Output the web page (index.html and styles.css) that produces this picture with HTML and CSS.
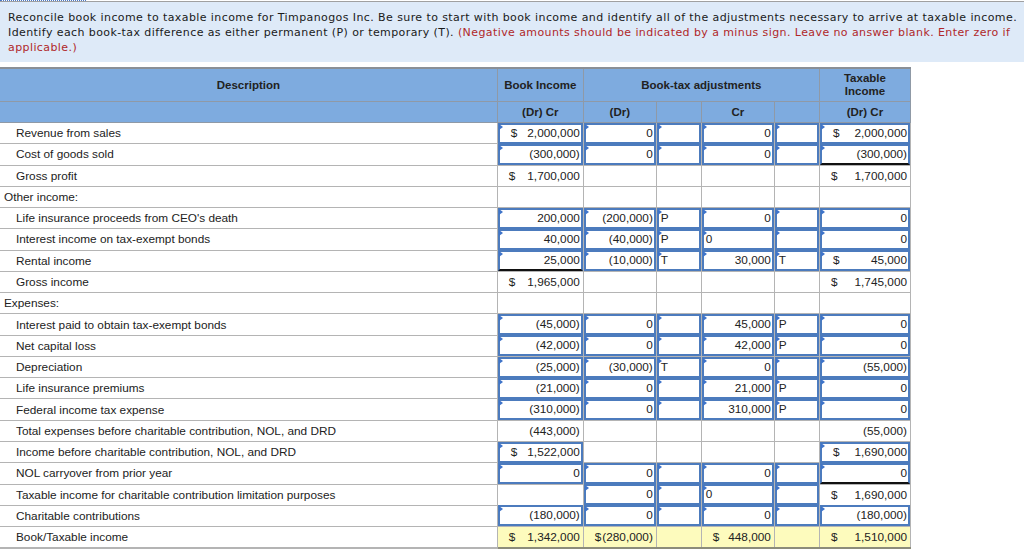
FILE: index.html
```html
<!DOCTYPE html>
<html>
<head>
<meta charset="utf-8">
<link rel="stylesheet" href="styles.css">
</head>
<body>
<div class="prompt">
  <p>Reconcile book income to taxable income for Timpanogos Inc. Be sure to start with book income and identify all of the adjustments necessary to arrive at taxable income. Identify each book-tax difference as either permanent (P) or temporary (T). <span class="warn">(Negative amounts should be indicated by a minus sign. Leave no answer blank. Enter zero if applicable.)</span></p>
</div>
<table class="recon">
  <colgroup>
    <col class="c-desc"><col class="c-book"><col class="c-dr"><col class="c-pt"><col class="c-cr"><col class="c-pt"><col class="c-tax">
  </colgroup>
  <thead>
    <tr class="h1">
      <th>Description</th>
      <th>Book Income</th>
      <th colspan="4">Book-tax adjustments</th>
      <th>Taxable<br>Income</th>
    </tr>
    <tr class="h2">
      <th></th>
      <th>(Dr) Cr</th>
      <th>(Dr)</th>
      <th></th>
      <th>Cr</th>
      <th></th>
      <th>(Dr) Cr</th>
    </tr>
  </thead>
  <tbody>
    <tr>
      <td class="desc ind">Revenue from sales</td>
      <td class="in"><div class="inp usd"><span>$</span><span>2,000,000</span></div></td>
      <td class="in"><div class="inp">0</div></td>
      <td class="in"><div class="inp l"></div></td>
      <td class="in"><div class="inp">0</div></td>
      <td class="in"><div class="inp l"></div></td>
      <td class="in"><div class="inp usd"><span>$</span><span>2,000,000</span></div></td>
    </tr>
    <tr>
      <td class="desc ind">Cost of goods sold</td>
      <td class="in"><div class="inp">(300,000)</div></td>
      <td class="in"><div class="inp">0</div></td>
      <td class="in"><div class="inp l"></div></td>
      <td class="in"><div class="inp">0</div></td>
      <td class="in"><div class="inp l"></div></td>
      <td class="in"><div class="inp ul">(300,000)</div></td>
    </tr>
    <tr>
      <td class="desc ind">Gross profit</td>
      <td class="num"><div class="usd"><span>$</span><span>1,700,000</span></div></td>
      <td></td><td></td><td></td><td></td>
      <td class="num"><div class="usd"><span>$</span><span>1,700,000</span></div></td>
    </tr>
    <tr>
      <td class="desc">Other income:</td>
      <td></td><td></td><td></td><td></td><td></td><td></td>
    </tr>
    <tr>
      <td class="desc ind">Life insurance proceeds from CEO's death</td>
      <td class="in"><div class="inp">200,000</div></td>
      <td class="in"><div class="inp">(200,000)</div></td>
      <td class="in"><div class="inp l">P</div></td>
      <td class="in"><div class="inp">0</div></td>
      <td class="in"><div class="inp l"></div></td>
      <td class="in"><div class="inp">0</div></td>
    </tr>
    <tr>
      <td class="desc ind">Interest income on tax-exempt bonds</td>
      <td class="in"><div class="inp">40,000</div></td>
      <td class="in"><div class="inp">(40,000)</div></td>
      <td class="in"><div class="inp l">P</div></td>
      <td class="in"><div class="inp l">0</div></td>
      <td class="in"><div class="inp l"></div></td>
      <td class="in"><div class="inp">0</div></td>
    </tr>
    <tr>
      <td class="desc ind">Rental income</td>
      <td class="in"><div class="inp ul">25,000</div></td>
      <td class="in"><div class="inp">(10,000)</div></td>
      <td class="in"><div class="inp l">T</div></td>
      <td class="in"><div class="inp">30,000</div></td>
      <td class="in"><div class="inp l">T</div></td>
      <td class="in"><div class="inp usd"><span>$</span><span>45,000</span></div></td>
    </tr>
    <tr>
      <td class="desc ind">Gross income</td>
      <td class="num"><div class="usd"><span>$</span><span>1,965,000</span></div></td>
      <td></td><td></td><td></td><td></td>
      <td class="num"><div class="usd"><span>$</span><span>1,745,000</span></div></td>
    </tr>
    <tr>
      <td class="desc">Expenses:</td>
      <td></td><td></td><td></td><td></td><td></td><td></td>
    </tr>
    <tr>
      <td class="desc ind">Interest paid to obtain tax-exempt bonds</td>
      <td class="in"><div class="inp">(45,000)</div></td>
      <td class="in"><div class="inp">0</div></td>
      <td class="in"><div class="inp l"></div></td>
      <td class="in"><div class="inp">45,000</div></td>
      <td class="in"><div class="inp l">P</div></td>
      <td class="in"><div class="inp">0</div></td>
    </tr>
    <tr>
      <td class="desc ind">Net capital loss</td>
      <td class="in"><div class="inp">(42,000)</div></td>
      <td class="in"><div class="inp">0</div></td>
      <td class="in"><div class="inp l"></div></td>
      <td class="in"><div class="inp">42,000</div></td>
      <td class="in"><div class="inp l">P</div></td>
      <td class="in"><div class="inp">0</div></td>
    </tr>
    <tr>
      <td class="desc ind">Depreciation</td>
      <td class="in"><div class="inp">(25,000)</div></td>
      <td class="in"><div class="inp">(30,000)</div></td>
      <td class="in"><div class="inp l">T</div></td>
      <td class="in"><div class="inp">0</div></td>
      <td class="in"><div class="inp l"></div></td>
      <td class="in"><div class="inp">(55,000)</div></td>
    </tr>
    <tr>
      <td class="desc ind">Life insurance premiums</td>
      <td class="in"><div class="inp">(21,000)</div></td>
      <td class="in"><div class="inp">0</div></td>
      <td class="in"><div class="inp l"></div></td>
      <td class="in"><div class="inp">21,000</div></td>
      <td class="in"><div class="inp l">P</div></td>
      <td class="in"><div class="inp">0</div></td>
    </tr>
    <tr>
      <td class="desc ind">Federal income tax expense</td>
      <td class="in"><div class="inp">(310,000)</div></td>
      <td class="in"><div class="inp">0</div></td>
      <td class="in"><div class="inp l"></div></td>
      <td class="in"><div class="inp">310,000</div></td>
      <td class="in"><div class="inp l">P</div></td>
      <td class="in"><div class="inp">0</div></td>
    </tr>
    <tr>
      <td class="desc ind">Total expenses before charitable contribution, NOL, and DRD</td>
      <td class="num">(443,000)</td>
      <td></td><td></td><td></td><td></td>
      <td class="num">(55,000)</td>
    </tr>
    <tr>
      <td class="desc ind">Income before charitable contribution, NOL, and DRD</td>
      <td class="in"><div class="inp usd"><span>$</span><span>1,522,000</span></div></td>
      <td></td><td></td><td></td><td></td>
      <td class="in"><div class="inp usd"><span>$</span><span>1,690,000</span></div></td>
    </tr>
    <tr>
      <td class="desc ind">NOL carryover from prior year</td>
      <td class="in"><div class="inp">0</div></td>
      <td class="in"><div class="inp">0</div></td>
      <td class="in"><div class="inp l"></div></td>
      <td class="in"><div class="inp">0</div></td>
      <td class="in"><div class="inp l"></div></td>
      <td class="in"><div class="inp ul">0</div></td>
    </tr>
    <tr>
      <td class="desc ind">Taxable income for charitable contribution limitation purposes</td>
      <td></td>
      <td class="in"><div class="inp">0</div></td>
      <td class="in"><div class="inp l"></div></td>
      <td class="in"><div class="inp l">0</div></td>
      <td class="in"><div class="inp l"></div></td>
      <td class="num"><div class="usd"><span>$</span><span>1,690,000</span></div></td>
    </tr>
    <tr>
      <td class="desc ind">Charitable contributions</td>
      <td class="in"><div class="inp">(180,000)</div></td>
      <td class="in"><div class="inp">0</div></td>
      <td class="in"><div class="inp l"></div></td>
      <td class="in"><div class="inp">0</div></td>
      <td class="in"><div class="inp l"></div></td>
      <td class="in"><div class="inp">(180,000)</div></td>
    </tr>
    <tr class="total">
      <td class="desc ind">Book/Taxable income</td>
      <td class="num hl"><div class="usd"><span>$</span><span>1,342,000</span></div></td>
      <td class="num hl"><div class="usd tight"><span>$</span><span>(280,000)</span></div></td>
      <td class="hl"></td>
      <td class="num hl"><div class="usd"><span>$</span><span>448,000</span></div></td>
      <td class="hl"></td>
      <td class="num hl"><div class="usd"><span>$</span><span>1,510,000</span></div></td>
    </tr>
  </tbody>
</table>
</body>
</html>
```
FILE: styles.css
```css
html, body {
  margin: 0;
  padding: 0;
  background: #ffffff;
}

.prompt {
  margin-top: 1px;
  border-top: 1px solid #a0a0a0;
  background: #deeaf8;
  padding: 8px 6px 7px 8px;
  height: 45px;
  position: relative;
}

.prompt::before {
  content: "";
  position: absolute;
  left: 0;
  top: -2px;
  width: 86px;
  border-top: 1px dotted #4a78c8;
}

.prompt p {
  margin: 0;
  font-family: "DejaVu Sans", Verdana, sans-serif;
  font-size: 11px;
  letter-spacing: 0.41px;
  line-height: 15px;
  color: #1a1a1a;
}

.warn {
  color: #b0282a;
}

.recon {
  margin-top: 5px;
  border-collapse: collapse;
  table-layout: fixed;
  width: 911px;
  font-family: "Liberation Sans", Arial, sans-serif;
  font-size: 11.8px;
  color: #222;
}

.c-desc { width: 497px; }
.c-book { width: 86px; }
.c-dr { width: 73px; }
.c-pt { width: 45px; }
.c-cr { width: 73px; }
.c-tax { width: 91px; }

.recon th {
  background: #7eabdf;
  border: 1px solid #8f99a6;
  font-weight: bold;
  font-size: 11.5px;
  text-align: center;
  padding: 0;
  line-height: 13px;
  color: #222;
}

.recon tr.h1 th {
  height: 32px;
  border-top: 2px solid #8a8f96;
}

.recon tr.h2 th {
  height: 20px;
}

.recon th:first-child {
  border-left: none;
}

.recon td {
  border: 1px solid #b4b4b4;
  padding: 0;
  height: 20.28px;
  vertical-align: middle;
  white-space: nowrap;
}

.recon td:first-child {
  border-left: none;
}

.desc {
  padding-left: 4px !important;
}

.desc.ind {
  padding-left: 16px !important;
}

.num {
  text-align: right;
  padding: 0 3px 0 0 !important;
}

.usd {
  display: flex;
  justify-content: space-between;
  padding-left: 11px;
}

.usd.tight {
  justify-content: flex-end;
  gap: 1px;
  padding-left: 0;
}

.in {
  padding: 0 !important;
}

.inp {
  position: relative;
  box-sizing: border-box;
  height: 21px;
  border: 2px solid #4c7bbd;
  background: #fff;
  text-align: right;
  padding: 0 1px 0 2px;
  line-height: 17px;
  margin: -1px 0;
}

.inp.usd {
  padding-left: 11px;
}

.inp.l {
  text-align: left;
}

.inp.ul {
  border-bottom-color: #111;
}

.inp::before {
  content: "";
  position: absolute;
  left: -1px;
  top: -1px;
  width: 0;
  height: 0;
  border-left: 4px solid #3f74c9;
  border-top: 3px solid transparent;
  border-bottom: 3px solid transparent;
}

.hl {
  background: #fdfbbd;
  border-bottom: 2px solid #8c8c7a !important;
}

tr.total td.desc {
  border-bottom: 2px solid #b4b4b4;
}
```
